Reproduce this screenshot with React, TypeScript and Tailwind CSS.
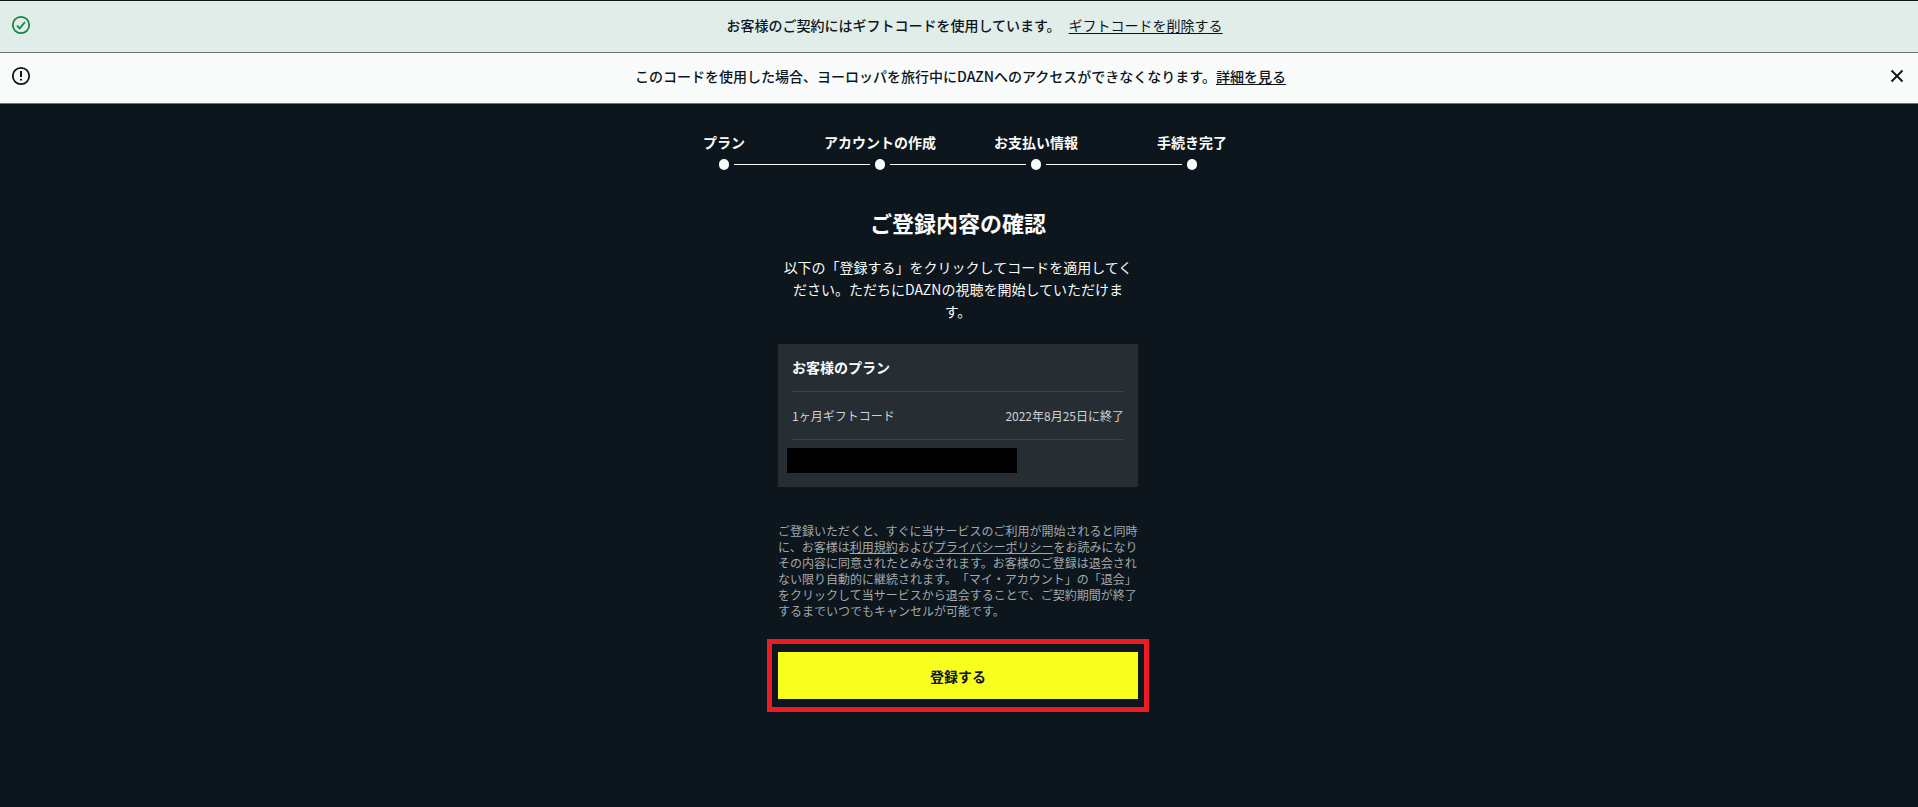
import React from "react";

const steps = ["プラン", "アカウントの作成", "お支払い情報", "手続き完了"];

function CheckIcon() {
  return (
    <svg width="20" height="20" viewBox="0 0 20 20" fill="none" stroke="#17864b" strokeWidth="1.8" aria-hidden="true">
      <circle cx="10" cy="10" r="8.2" />
      <path d="M6 10.6l2.7 2.7L14 7" />
    </svg>
  );
}

function AlertIcon() {
  return (
    <svg width="20" height="20" viewBox="0 0 20 20" fill="none" stroke="#0c161c" strokeWidth="1.8" aria-hidden="true">
      <circle cx="10" cy="10" r="8.2" />
      <path d="M10 5v6M10 12.8v1.8" strokeWidth="2" />
    </svg>
  );
}

function CloseIcon() {
  return (
    <svg width="14" height="14" viewBox="0 0 14 14" fill="none" stroke="#0c161c" strokeWidth="1.9" aria-hidden="true">
      <path d="M1.5 1.5l11 11M12.5 1.5l-11 11" />
    </svg>
  );
}

function Banners() {
  return (
    <div className="border-t border-[#0c161c] text-sm font-medium text-[#0c161c]">
      {/* Gift code applied */}
      <div className="flex h-[52px] items-center border-b border-[#6d757a] bg-[#e1ede8] pb-1 pl-[11px]">
        <CheckIcon />
        <p className="flex flex-1 justify-center gap-2">
          <span>お客様のご契約にはギフトコードを使用しています。</span>
          <a href="#" className="font-normal underline underline-offset-2">
            ギフトコードを削除する
          </a>
        </p>
      </div>

      {/* Travel notice */}
      <div className="flex h-[51px] items-center border-b border-[#6d757a] bg-[#f9fbfa] pr-3.5 pb-1 pl-[11px]">
        <AlertIcon />
        <p className="flex-1 text-center">
          このコードを使用した場合、ヨーロッパを旅行中にDAZNへのアクセスができなくなります。
          <a href="#" className="underline underline-offset-2">
            詳細を見る
          </a>
        </p>
        <button type="button" aria-label="閉じる">
          <CloseIcon />
        </button>
      </div>
    </div>
  );
}

function Stepper() {
  return (
    <ol className="flex w-[624px] text-sm leading-5 font-bold">
      {steps.map((step, i) => (
        <li key={step} className="flex flex-1 flex-col items-center gap-[7px]">
          <span>{step}</span>
          <div className="flex w-full items-center gap-[5px]">
            <div className={i > 0 ? "h-px flex-1 bg-[#f9fafa]" : "h-px flex-1"}></div>
            <div className="h-[11px] w-[10px] rounded-full bg-[#f9fafa]"></div>
            <div className={i < steps.length - 1 ? "h-px flex-1 bg-[#f9fafa]" : "h-px flex-1"}></div>
          </div>
        </li>
      ))}
    </ol>
  );
}

export default function App() {
  return (
    <div
      lang="ja"
      className="min-h-screen bg-[#0c161c] font-['Noto_Sans_CJK_JP',sans-serif] text-[#f9fafa] [text-spacing-trim:space-all]"
    >
      <Banners />

      <main className="flex flex-col items-center pt-7 pr-0.5 pb-12">
        <Stepper />

        <h1 className="mt-[38px] text-[22px] leading-7 font-bold">ご登録内容の確認</h1>
        <p className="mt-5 w-[360px] text-center text-sm leading-[22px]">
          以下の「登録する」をクリックしてコードを適用してください。ただちにDAZNの視聴を開始していただけま
          <br />
          す。
        </p>

        {/* Plan card */}
        <section className="mt-[22px] w-[360px] bg-[#262d33] px-3.5 pb-3.5">
          <h2 className="border-b border-[#3d4449] text-sm leading-[47px] font-bold">お客様のプラン</h2>
          <div className="flex justify-between border-b border-[#3d4449] text-xs leading-[47px] text-[#d0d3d5]">
            <span>1ヶ月ギフトコード</span>
            <span>2022年8月25日に終了</span>
          </div>
          <div className="mt-2 -ml-[5px] h-[25px] w-[230px] bg-black"></div>
        </section>

        <p className="mt-9 w-[360px] text-xs leading-4 text-[#a3a8ab]">
          ご登録いただくと、すぐに当サービスのご利用が開始されると同時に、お客様は
          <a href="#" className="inline-block underline">利用規約</a>および
          <a href="#" className="inline-block underline">プライバシーポリシー</a>
          をお読みになりその内容に同意されたとみなされます。お客様のご登録は退会されない限り自動的に継続されます。「マイ・アカウント」の「退会」をクリックして当サービスから退会することで、ご契約期間が終了するまでいつでもキャンセルが可能です。
        </p>

        {/* Highlighted submit button */}
        <div className="mt-5 w-[382px] border-[5px] border-[#ed1c24] px-1.5 py-2">
          <button type="button" className="h-[47px] w-full bg-[#f8ff1c] text-sm font-bold text-[#0c161c]">
            登録する
          </button>
        </div>
      </main>
    </div>
  );
}
